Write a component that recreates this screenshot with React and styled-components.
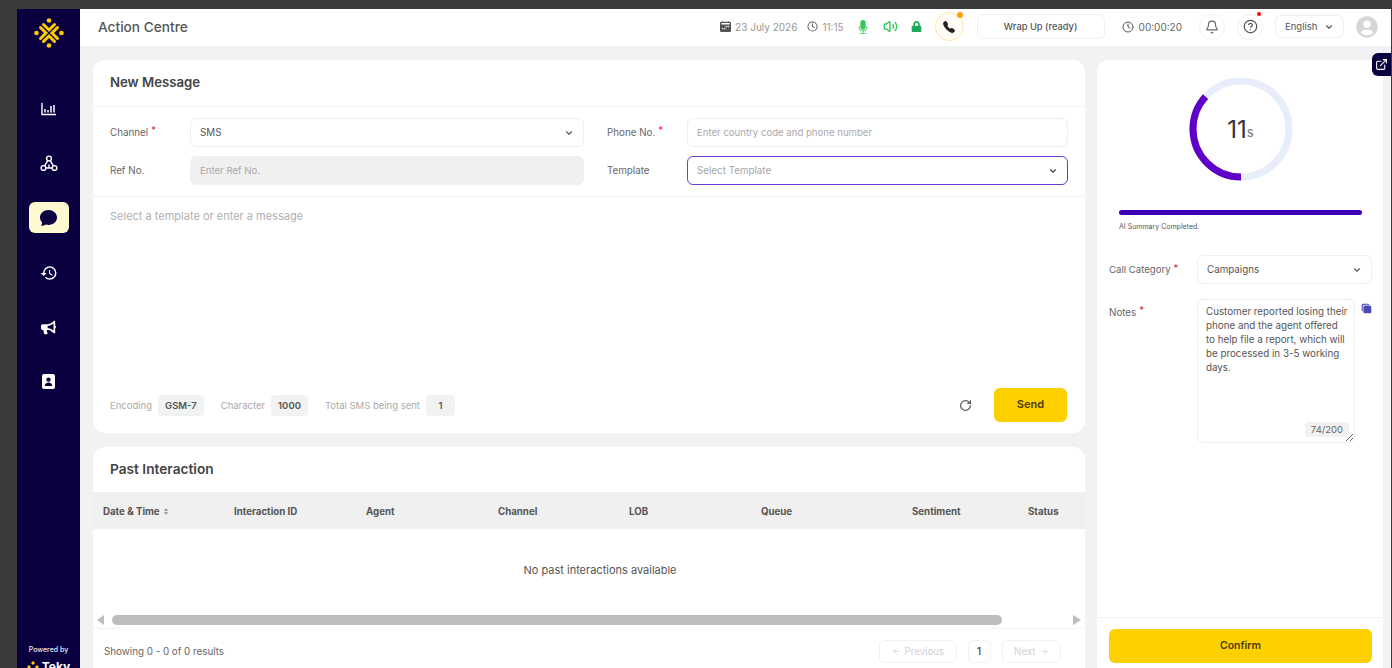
import React from "react";
import styled, { createGlobalStyle } from "styled-components";
import {
  ArrowLeft,
  ArrowRight,
  Bell,
  ChevronDown,
  CircleHelp,
  Clock,
  ExternalLink,
  RotateCw,
  Volume2,
} from "lucide-react";
import { BsCalendar2WeekFill, BsChatFill, BsMicFill, BsTelephoneFill } from "react-icons/bs";
import { FaBullhorn, FaLock, FaUserCircle } from "react-icons/fa";
import { IoCopy } from "react-icons/io5";
import { MdHistory } from "react-icons/md";

const GlobalStyle = createGlobalStyle`
  html, body {
    margin: 0;
    height: 100%;
    overflow: hidden;
    background: #3a3a3a;
  }
  * {
    box-sizing: border-box;
  }
  body, textarea {
    font-family: Inter, "Noto Sans", sans-serif;
  }
`;

const columns = [
  { name: "Date & Time", width: 131, sort: true },
  { name: "Interaction ID", width: 132 },
  { name: "Agent", width: 132 },
  { name: "Channel", width: 131 },
  { name: "LOB", width: 132 },
  { name: "Queue", width: 151 },
  { name: "Sentiment", width: 116 },
  { name: "Status", width: 57 },
];

function Logo() {
  return (
    <svg width="30" height="30" viewBox="0 0 30 30" fill="none" stroke="#ffcc00" strokeWidth="3" strokeLinecap="round">
      <circle cx="15" cy="2.5" r="2.3" fill="#ffcc00" stroke="none" />
      <circle cx="15" cy="27.5" r="2.3" fill="#ffcc00" stroke="none" />
      <circle cx="2.5" cy="15" r="2.3" fill="#ffcc00" stroke="none" />
      <circle cx="27.5" cy="15" r="2.3" fill="#ffcc00" stroke="none" />
      <path d="M9.5 6.5 15 12 20.5 6.5" />
      <path d="M9.5 23.5 15 18 20.5 23.5" />
      <path d="M6.5 9.5 12 15 6.5 20.5" />
      <path d="M23.5 9.5 18 15 23.5 20.5" />
    </svg>
  );
}

function ChartIcon() {
  return (
    <svg width="16" height="14" viewBox="0 0 16 14" fill="none" stroke="#fff">
      <path d="M1 1v11.5h14" strokeWidth="1.4" />
      <path d="M4 10.5V7M7 10.5V8M10 10.5V4M13 10.5V3" strokeWidth="1.5" />
    </svg>
  );
}

function NodesIcon() {
  return (
    <svg width="18" height="17" viewBox="0 0 18 17" fill="none" stroke="#fff" strokeWidth="1.4">
      <circle cx="9" cy="3.5" r="2.4" />
      <circle cx="3.5" cy="13" r="2.4" />
      <circle cx="14.5" cy="13" r="2.4" />
      <path d="M7.7 5.6 4.7 10.9M10.3 5.6l3 5.3M5.9 13h6.2M9 9.5V13" />
    </svg>
  );
}

function ContactIcon() {
  return (
    <svg width="13" height="15" viewBox="0 0 13 15">
      <rect width="13" height="15" rx="2" fill="#fff" />
      <circle cx="6.5" cy="5.6" r="2.2" fill="#0a0040" />
      <path d="M2.8 12c0-2.2 1.6-3.4 3.7-3.4s3.7 1.2 3.7 3.4z" fill="#0a0040" />
    </svg>
  );
}

function SortIcon() {
  return (
    <SortMark width="4" height="7" viewBox="0 0 5 8" fill="#888">
      <path d="M2.5 0 5 3H0zM2.5 8 0 5h5z" />
    </SortMark>
  );
}

function Caret({ color }) {
  return <ChevronDown size={10} strokeWidth={2.6} color={color} />;
}

function TimerRing() {
  const radius = 48;
  const length = 2 * Math.PI * radius;
  return (
    <svg width="104" height="104" viewBox="0 0 104 104" fill="none" strokeWidth="7">
      <circle cx="52" cy="52" r={radius} stroke="#e8edfb" />
      <circle
        cx="52"
        cy="52"
        r={radius}
        stroke="#5f00c9"
        strokeDasharray={`${length * 0.367} ${length}`}
        transform="rotate(90 52 52)"
      />
    </svg>
  );
}

export default function App() {
  return (
    <Page>
      <GlobalStyle />
      <Sidebar>
        <LogoSlot>
          <Logo />
        </LogoSlot>
        <Nav>
          <NavItem><ChartIcon /></NavItem>
          <NavItem><NodesIcon /></NavItem>
          <NavItem $active><BsChatFill size={17} /></NavItem>
          <NavItem><MdHistory size={18} /></NavItem>
          <NavItem><FaBullhorn size={15} /></NavItem>
          <NavItem><ContactIcon /></NavItem>
        </Nav>
        <Powered>
          <span>Powered by</span>
          <Brand>
            <svg width="12" height="12" viewBox="0 0 12 12" fill="#ffcc00">
              <path d="M6 0l2 2-2 2-2-2zM2 4l2 2-2 2-2-2zM10 4l2 2-2 2-2-2zM6 8l2 2-2 2-2-2z" />
            </svg>
            Teky
          </Brand>
        </Powered>
      </Sidebar>

      <Main>
        <Header>
          <PageTitle>Action Centre</PageTitle>
          <HeaderTools>
            <MetaGroup>
              <Meta><BsCalendar2WeekFill size={11} color="#555" />23 July 2026</Meta>
              <Meta><Clock size={11} color="#666" strokeWidth={2.2} />11:15</Meta>
            </MetaGroup>
            <StatusGroup>
              <BsMicFill size={14} color="#34c759" />
              <Volume2 size={15} color="#34c759" strokeWidth={2.2} />
              <FaLock size={11} color="#1fa85a" />
            </StatusGroup>
            <CallButton>
              <BsTelephoneFill size={12} color="#222" />
            </CallButton>
            <WrapUp>Wrap Up (ready)</WrapUp>
            <Timer><Clock size={12} color="#555" strokeWidth={2} />00:00:20</Timer>
            <RoundButton><Bell size={14} color="#666" /></RoundButton>
            <RoundButton $alert><CircleHelp size={15} color="#555" /></RoundButton>
            <Language>English<Caret /></Language>
            <FaUserCircle size={22} color="#d6d6d6" />
          </HeaderTools>
        </Header>

        <Body>
          <LeftColumn>
            <Card>
              <CardTitle>New Message</CardTitle>
              <FormGrid>
                <Field>
                  <FieldLabel>Channel<Star>*</Star></FieldLabel>
                  <Select>SMS<Caret /></Select>
                </Field>
                <Field>
                  <FieldLabel>Phone No.<Star>*</Star></FieldLabel>
                  <Input placeholder="Enter country code and phone number" />
                </Field>
                <Field>
                  <FieldLabel>Ref No.</FieldLabel>
                  <Input $disabled disabled placeholder="Enter Ref No." />
                </Field>
                <Field>
                  <FieldLabel>Template</FieldLabel>
                  <Select $focused $muted>Select Template<Caret color="#444" /></Select>
                </Field>
              </FormGrid>
              <Message placeholder="Select a template or enter a message" />
              <ComposeFooter>
                <Counts>
                  <Count>Encoding<Chip>GSM-7</Chip></Count>
                  <Count>Character<Chip>1000</Chip></Count>
                  <Count>Total SMS being sent<Chip $wide>1</Chip></Count>
                </Counts>
                <ComposeActions>
                  <RotateCw size={13} color="#555" strokeWidth={2.2} />
                  <SendButton>Send</SendButton>
                </ComposeActions>
              </ComposeFooter>
            </Card>

            <TableCard>
              <CardTitle $plain>Past Interaction</CardTitle>
              <TableHead>
                {columns.map((col) => (
                  <HeadCell key={col.name} $width={col.width}>
                    {col.name}
                    {col.sort && <SortIcon />}
                  </HeadCell>
                ))}
              </TableHead>
              <EmptyRow>No past interactions available</EmptyRow>
              <Scrollbar>
                <ScrollArrow $left />
                <ScrollThumb />
                <ScrollArrow />
              </Scrollbar>
              <TableFooter>
                <span>Showing 0 - 0 of 0 results</span>
                <Pager>
                  <PageButton><ArrowLeft size={9} />Previous</PageButton>
                  <PageNumber>1</PageNumber>
                  <PageButton>Next<ArrowRight size={9} /></PageButton>
                </Pager>
              </TableFooter>
            </TableCard>
          </LeftColumn>

          <SidePanel>
            <PopOut><ExternalLink size={13} color="#fff" /></PopOut>
            <SideContent>
              <RingWrap>
                <TimerRing />
                <RingLabel>11<small>s</small></RingLabel>
              </RingWrap>
              <Progress />
              <ProgressCaption>AI Summary Completed.</ProgressCaption>
              <SideField>
                <FieldLabel>Call Category<Star>*</Star></FieldLabel>
                <Select>Campaigns<Caret /></Select>
              </SideField>
              <NotesField>
                <FieldLabel>Notes<Star>*</Star></FieldLabel>
                <NotesBox>
                  <Notes
                    readOnly
                    value="Customer reported losing their phone and the agent offered to help file a report, which will be processed in 3-5 working days."
                  />
                  <NotesCount>74/200</NotesCount>
                </NotesBox>
                <IoCopy size={11} color="#4a4ab5" />
              </NotesField>
            </SideContent>
            <SideFooter>
              <ConfirmButton>Confirm</ConfirmButton>
            </SideFooter>
          </SidePanel>
        </Body>
      </Main>
    </Page>
  );
}

const Page = styled.div`
  display: flex;
  height: 690px;
  padding: 9px 1px 0 17px;
  background: #3a3a3a;
  color: #444;
`;

const Sidebar = styled.aside`
  display: flex;
  flex-direction: column;
  align-items: center;
  flex: 0 0 63px;
  background: #0a0040;
  color: #fff;
`;

const LogoSlot = styled.div`
  display: flex;
  height: 30px;
  margin-top: 9px;
`;

const Nav = styled.nav`
  display: flex;
  flex-direction: column;
  align-items: center;
  gap: 23.7px;
  margin-top: 45px;
`;

const NavItem = styled.div`
  display: flex;
  align-items: center;
  justify-content: center;
  width: 40px;
  height: 31px;
  border-radius: 6px;
  color: ${(p) => (p.$active ? "#0a0040" : "#fff")};
  background: ${(p) => (p.$active ? "#fff8d0" : "transparent")};
`;

const Powered = styled.div`
  display: flex;
  flex-direction: column;
  align-items: center;
  margin-top: auto;
  padding-bottom: 16px;
  font-size: 7px;
  font-weight: 500;
  color: #e8e6f5;
`;

const Brand = styled.div`
  display: flex;
  align-items: center;
  gap: 3px;
  margin-top: 5px;
  font-size: 12px;
  font-weight: 700;
  color: #fff;
`;

const Main = styled.div`
  display: flex;
  flex-direction: column;
  flex: 1;
  min-width: 0;
  background: #f1f2f4;
`;

const Header = styled.header`
  display: flex;
  align-items: center;
  justify-content: space-between;
  flex: 0 0 37px;
  padding: 0 13px 2px 18px;
  background: #fff;
`;

const PageTitle = styled.h1`
  margin: 0;
  font-size: 13.7px;
  font-weight: 500;
  color: #555;
`;

const HeaderTools = styled.div`
  display: flex;
  align-items: center;
  gap: 12px;
`;

const MetaGroup = styled.div`
  display: flex;
  gap: 10px;
`;

const Meta = styled.span`
  display: flex;
  align-items: center;
  gap: 4px;
  font-size: 10px;
  color: #999;
`;

const StatusGroup = styled.div`
  display: flex;
  align-items: center;
  gap: 13px;
  margin-right: 1px;
`;

const CallButton = styled.div`
  position: relative;
  display: flex;
  align-items: center;
  justify-content: center;
  width: 29px;
  height: 29px;
  margin-right: 1px;
  border: 1.5px solid #ffe8a8;
  border-radius: 50%;
  background: #fffdf5;
  &::after {
    content: "";
    position: absolute;
    top: -1px;
    right: 0;
    width: 6px;
    height: 6px;
    border-radius: 50%;
    background: #ff9f0a;
  }
`;

const WrapUp = styled.div`
  display: flex;
  align-items: center;
  justify-content: center;
  width: 128px;
  height: 25px;
  border: 1px solid #eff0f2;
  border-radius: 6px;
  font-size: 9.3px;
  font-weight: 500;
  color: #555;
`;

const Timer = styled.span`
  display: flex;
  align-items: center;
  gap: 5px;
  margin: 0 5px;
  font-size: 10px;
  color: #666;
`;

const RoundButton = styled.div`
  position: relative;
  display: flex;
  align-items: center;
  justify-content: center;
  width: 26px;
  height: 26px;
  border: 1px solid #f0f1f3;
  border-radius: 50%;
  &::after {
    content: "";
    display: ${(p) => (p.$alert ? "block" : "none")};
    position: absolute;
    top: -3px;
    right: 1px;
    width: 4px;
    height: 4px;
    border-radius: 50%;
    background: #f00;
  }
`;

const Language = styled.div`
  display: flex;
  align-items: center;
  justify-content: space-between;
  width: 69px;
  height: 23px;
  padding: 0 9px;
  border: 1px solid #eff0f2;
  border-radius: 6px;
  font-size: 9.5px;
  color: #555;
`;

const Body = styled.div`
  display: flex;
  flex: 1;
  gap: 12px;
  padding: 14px 8px 0 13px;
  min-height: 0;
`;

const LeftColumn = styled.div`
  display: flex;
  flex-direction: column;
  flex: 0 0 992px;
  min-width: 0;
  gap: 14px;
`;

const Card = styled.section`
  display: flex;
  flex-direction: column;
  height: 373px;
  border-radius: 12px;
  background: #fff;
`;

const TableCard = styled(Card)`
  flex: 1;
  height: auto;
  border-radius: 12px 12px 0 0;
`;

const CardTitle = styled.h2`
  margin: 0;
  padding: 0 17px;
  flex: 0 0 ${(p) => (p.$plain ? "45px" : "47px")};
  line-height: 45px;
  font-size: ${(p) => (p.$plain ? "13.7px" : "13.2px")};
  font-weight: 600;
  color: #444;
  border-bottom: ${(p) => (p.$plain ? "none" : "1px solid #f1f2f4")};
`;

const FormGrid = styled.div`
  display: grid;
  grid-template-columns: 474px 1fr;
  column-gap: 23px;
  row-gap: 9px;
  padding: 11px 17px;
  border-bottom: 1px solid #f1f2f4;
`;

const Field = styled.div`
  display: flex;
  align-items: center;
`;

const FieldLabel = styled.label`
  flex: 0 0 80px;
  font-size: 9.8px;
  color: #666;
`;

const Star = styled.span`
  margin-left: 3px;
  line-height: 0;
  color: #e5222e;
  vertical-align: 2px;
`;

const Select = styled.div`
  display: flex;
  align-items: center;
  justify-content: space-between;
  flex: 1;
  height: 29px;
  padding: 0 9px;
  border: 1px solid ${(p) => (p.$focused ? "#6a3fd0" : "#eeeff1")};
  border-radius: 6px;
  font-size: 9.8px;
  color: ${(p) => (p.$muted ? "#a5a5a5" : "#555")};
`;

const Input = styled.input`
  flex: 1;
  min-width: 0;
  height: 29px;
  padding: 0 9px;
  border: 1px solid ${(p) => (p.$disabled ? "#f0f0f0" : "#eeeff1")};
  border-radius: 6px;
  outline: none;
  font: inherit;
  font-size: 9.6px;
  background: ${(p) => (p.$disabled ? "#f0f0f0" : "#fff")};
  &::placeholder {
    color: #a9a9a9;
  }
`;

const Message = styled.textarea`
  flex: 1;
  padding: 12px 17px;
  border: none;
  outline: none;
  resize: none;
  font-size: 11px;
  background: transparent;
  &::placeholder {
    color: #b0b0b0;
  }
`;

const ComposeFooter = styled.div`
  display: flex;
  align-items: center;
  justify-content: space-between;
  padding: 0 18px 11px 17px;
`;

const Counts = styled.div`
  display: flex;
  gap: 17px;
`;

const Count = styled.span`
  display: flex;
  align-items: center;
  gap: 6px;
  font-size: 9.5px;
  color: #aaa;
`;

const Chip = styled.span`
  display: flex;
  align-items: center;
  justify-content: center;
  min-width: ${(p) => (p.$wide ? "29px" : "0")};
  height: 21px;
  padding: 0 7px;
  border-radius: 4px;
  font-weight: 600;
  color: #555;
  background: #f1f2f2;
`;

const ComposeActions = styled.div`
  display: flex;
  align-items: center;
  gap: 22px;
`;

const SendButton = styled.button`
  width: 73px;
  height: 34px;
  padding: 0 0 2px;
  border: none;
  border-radius: 6px;
  font: inherit;
  font-size: 11px;
  font-weight: 600;
  color: #4a3b00;
  background: #ffd000;
`;

const TableHead = styled.div`
  display: flex;
  flex: 0 0 37px;
  align-items: center;
  padding: 1px 0 0 10px;
  background: #f0f0f0;
`;

const HeadCell = styled.div`
  flex: 0 0 ${(p) => p.$width}px;
  font-size: 9.7px;
  font-weight: 700;
  color: #555;
`;

const SortMark = styled.svg`
  margin-left: 4px;
`;

const EmptyRow = styled.div`
  display: flex;
  flex: 0 0 86px;
  align-items: center;
  justify-content: center;
  padding: 0 0 5px 22px;
  font-size: 11px;
  color: #555;
`;

const Scrollbar = styled.div`
  display: flex;
  align-items: center;
  flex: 0 0 13px;
  padding: 0 4px 3px;
  border-bottom: 1px solid #f3f3f3;
`;

const ScrollArrow = styled.span`
  width: 0;
  height: 0;
  border-top: 5px solid transparent;
  border-bottom: 5px solid transparent;
  ${(p) => (p.$left ? "border-right: 7px solid #bdbdbd;" : "border-left: 8px solid #bdbdbd;")}
`;

const ScrollThumb = styled.span`
  width: 890px;
  height: 10px;
  margin: 0 auto 0 8px;
  border-radius: 5px;
  background: #bdbdbd;
`;

const TableFooter = styled.div`
  display: flex;
  align-items: center;
  justify-content: space-between;
  padding: 11px 24px 0 11px;
  font-size: 9.8px;
  color: #666;
`;

const Pager = styled.div`
  display: flex;
  gap: 11px;
`;

const PageButton = styled.div`
  display: flex;
  align-items: center;
  justify-content: center;
  gap: 4px;
  padding: 0 11.5px;
  height: 23px;
  border: 1px solid #f1f2f3;
  border-radius: 5px;
  font-size: 9.7px;
  color: #d2d2d2;
`;

const PageNumber = styled(PageButton)`
  width: 23px;
  padding: 0;
  font-weight: 600;
  color: #555;
`;

const SidePanel = styled.aside`
  position: relative;
  display: flex;
  flex-direction: column;
  flex: 0 0 286px;
  height: 608px;
  border-radius: 12px 12px 0 0;
  background: #fff;
`;

const PopOut = styled.div`
  position: absolute;
  top: -7px;
  right: -8px;
  display: flex;
  align-items: center;
  justify-content: center;
  width: 19px;
  height: 23px;
  border-radius: 6px 0 0 6px;
  background: #0a0040;
`;

const SideContent = styled.div`
  flex: 1;
  padding: 17px 11px 0 12px;
`;

const RingWrap = styled.div`
  position: relative;
  display: flex;
  justify-content: center;
  height: 104px;
`;

const RingLabel = styled.div`
  position: absolute;
  inset: 0;
  display: flex;
  align-items: center;
  justify-content: center;
  font-size: 24px;
  color: #333;
  small {
    margin-top: 6px;
    font-size: 13px;
    color: #777;
  }
`;

const Progress = styled.div`
  height: 5px;
  margin: 29px 10px 0;
  border-radius: 3px;
  background: #3d00b5;
`;

const ProgressCaption = styled.div`
  margin: 7px 10px 0;
  font-size: 7px;
  color: #555;
`;

const SideField = styled.div`
  display: flex;
  align-items: center;
  margin-top: 24px;
  ${FieldLabel} {
    flex-basis: 88px;
    font-size: 9.6px;
  }
`;

const NotesField = styled.div`
  display: flex;
  align-items: flex-start;
  gap: 6px;
  margin-top: 15px;
  ${FieldLabel} {
    flex: 0 0 82px;
    margin-top: 8px;
  }
  svg {
    margin-top: 4px;
  }
`;

const NotesBox = styled.div`
  position: relative;
  display: flex;
  flex: 0 0 158px;
`;

const Notes = styled.textarea`
  width: 158px;
  height: 144px;
  padding: 5px 5px 6px 8px;
  border: 1px solid #eeeff1;
  border-radius: 6px;
  outline: none;
  resize: vertical;
  font-size: 9.8px;
  line-height: 14px;
  color: #555;
`;

const NotesCount = styled.span`
  position: absolute;
  right: 6px;
  bottom: 6px;
  padding: 2px 6px;
  border-radius: 4px;
  font-size: 9.5px;
  color: #666;
  background: #f1f1f1;
`;

const SideFooter = styled.div`
  flex: 0 0 51px;
  padding: 11px 11px 0 12px;
  border-top: 1px solid #f1f2f4;
`;

const ConfirmButton = styled.button`
  width: 100%;
  height: 34px;
  padding: 0 0 2px;
  border: none;
  border-radius: 6px;
  font: inherit;
  font-size: 10.5px;
  font-weight: 600;
  color: #4a3b00;
  background: #ffd000;
`;
